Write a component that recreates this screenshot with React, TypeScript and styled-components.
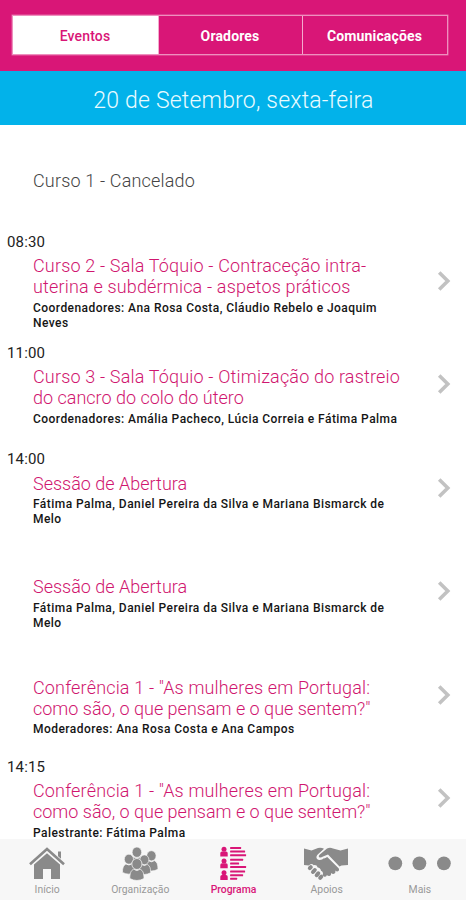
import React from 'react';
import styled, { createGlobalStyle } from 'styled-components';

const PINK = '#d91677';
const GREY = '#8a8a8a';

const GlobalStyle = createGlobalStyle`
  * { box-sizing: border-box; }
  body { margin: 0; background: #fff; font-family: Roboto, sans-serif; }
`;

const Screen = styled.div`
  display: flex;
  flex-direction: column;
  height: 900px;
  width: 466px;
  overflow: hidden;
  background: #fff;
`;

const Header = styled.header`
  flex: none;
  height: 71px;
  padding: 15px 18px 0 12px;
  background: ${PINK};
`;

const Segments = styled.div`
  display: grid;
  grid-template-columns: 145px 144px 1fr;
  height: 40px;
  border: 1px solid #ee90be;
  box-shadow: 0 0 0 0.5px #e668a8;
`;

const Segment = styled.button<{ $active?: boolean }>`
  border: 0;
  border-left: ${p => (p.$active ? '0' : '1.5px solid #f3abce')};
  padding: 2px 1px 0 0;
  background: ${p => (p.$active ? '#fff' : 'transparent')};
  color: ${p => (p.$active ? PINK : '#fff')};
  font: ${p => (p.$active ? 500 : 700)} 14px Roboto, sans-serif;
  letter-spacing: 0.15px;
`;

const DateBar = styled.div`
  flex: none;
  display: flex;
  align-items: center;
  justify-content: center;
  height: 54px;
  padding: 5px 0 0 1px;
  background: #02b2ea;
  color: #e9fbff;
  font-size: 23px;
  font-weight: 300;
  letter-spacing: 0.2px;
`;

const List = styled.main`
  flex: 1;
  min-height: 0;
  overflow: hidden;
`;

const Row = styled.article`
  display: flex;
  align-items: center;
  justify-content: space-between;
  height: 103.5px;
  padding: 0 15px 0 7px;
  > svg { margin-top: 1px; }
`;

const Time = styled.time`
  display: block;
  height: 21.5px;
  line-height: 17px;
  font-size: 15px;
  letter-spacing: 0.15px;
  color: #222;
`;

const Details = styled.div`
  padding-left: 26px;
  white-space: pre;
`;

const Title = styled.h2<{ $muted?: boolean }>`
  margin: 0;
  font-size: 18px;
  font-weight: 300;
  line-height: 21px;
  color: ${p => (p.$muted ? '#444' : '#d0166f')};
`;

const TitleLine = styled.span<{ $loose: boolean }>`
  display: block;
  letter-spacing: ${p => (p.$loose ? '0.17px' : '0')};
`;

const People = styled.p`
  margin: 3.5px 0 -3.5px;
  min-height: 15px;
  font-size: 12px;
  font-weight: 500;
  line-height: 15px;
  letter-spacing: 0.45px;
  color: #151515;
`;

const TabBar = styled.nav`
  flex: none;
  display: grid;
  grid-template-columns: repeat(5, 1fr);
  height: 61px;
  background: #f7f7f7;
`;

const Tab = styled.a<{ $active?: boolean }>`
  display: flex;
  flex-direction: column;
  align-items: center;
  padding-top: 6px;
  color: ${p => (p.$active ? PINK : GREY)};
  font-size: 10.4px;
  font-weight: ${p => (p.$active ? 500 : 400)};
  line-height: 13px;
  svg { display: block; }
`;

const TabLabel = styled.span<{ $active?: boolean }>`
  padding-left: 1px;
  color: ${p => (p.$active ? PINK : '#999')};
`;

const Chevron = () => (
  <svg width="14" height="22" viewBox="0 0 14 22" fill="none" stroke="#c2c2c2" strokeWidth="3.6">
    <path d="M2.2 2.5 10.8 11 2.2 19.5" />
  </svg>
);

const HomeIcon = () => (
  <svg width="48" height="38" viewBox="0 0 48 38" fill="currentColor">
    <path d="M35 6.500h3v8l-3-2.700zM24 8.200 37 19.500V34h-9V24h-8v10h-9V19.500z" />
    <path d="M7 19.200 24 4l17 15.200" fill="none" stroke="#f7f7f7" strokeWidth="4" />
    <path d="M7 19.200 24 4l17 15.200" fill="none" stroke="currentColor" strokeWidth="2.600" />
  </svg>
);

const PERSON = 'M-6.600 13.500c0-4.800 1-7.500 3.600-8.700Q0 7.200 3 4.800C5.600 6 6.600 8.700 6.600 13.500Q0 17-6.600 13.500z';

const Figure = ({ x, y, s }: { x: number; y: number; s: number }) => (
  <g transform={`translate(${x} ${y}) scale(${s})`} stroke="#f7f7f7" strokeWidth="0.7">
    <path d={PERSON} />
    <ellipse rx="4.700" ry="5.100" />
  </g>
);

const GroupIcon = () => (
  <svg width="48" height="38" viewBox="0 0 48 38" fill="currentColor">
    <Figure x={20.9} y={7.2} s={1.02} />
    <Figure x={35.4} y={10.8} s={1} />
    <Figure x={12.9} y={14.2} s={0.98} />
    <Figure x={28.4} y={14.8} s={0.96} />
    <Figure x={20.9} y={19} s={1.08} />
  </svg>
);

const SPEAKER_LINES = [
  [11, 15, 16],
  [13, 9, 16],
  [15, 13, 7],
];

const ProgramIcon = () => (
  <svg width="48" height="38" viewBox="0 0 48 38" fill="currentColor">
    {SPEAKER_LINES.map((widths, i) => (
      <g key={i} transform={`translate(11.300 ${1.8 + i * 11.8})`}>
        <circle cx="3.700" cy="2.400" r="2.500" />
        <path d="M0 9.700V6.300Q0 4.700 1.700 4.700h4Q7.400 4.700 7.400 6.300v3.400z" />
        {widths.map((w, j) => (
          <rect key={j} x="9.800" y={0.2 + j * 3.6} width={w} height="2" rx="0.500" />
        ))}
      </g>
    ))}
  </svg>
);

const HandshakeIcon = () => (
  <svg width="48" height="38" viewBox="0 0 48 38" fill="currentColor">
    <path d="M2 3.500 9.500 5.500 16 3q3-.8 6 .7L15.200 10q-2 3.300 1 4.700 3.200 1 6-1.700l3-1.200L36.500 23q1.600 2.600-1.200 3.500-1 0-2-1 .7 3-2 3.500-1.200 0-2.200-1 .2 2.800-2 3-1.400 0-2.200-1-.5 2.500-3 1.500l-1.400-1.200q1.500-3-1.500-4.500-.4-3-3.300-3.300-1-3-4-2.300-2.200-2.700-5 .2L2 20z" />
    <path d="M46 3.500V20l-6.500.500-2 1L26 9.500l-5 2q-2.500 1.800-4 .5-.8-.8.500-2.200L25 3.500q3-1.500 6 0L38.500 5.500z" />
    <path d="M22 13 25.300 11.200 37 22.600" fill="none" stroke="#f7f7f7" strokeWidth="1.100" />
    <g stroke="currentColor" strokeWidth="4" strokeLinecap="round">
      <path d="M8.800 22.200 7.800 23.200M12.800 25 11 27M16.300 28.300 14.700 30.200M19.300 31.700 18.200 32.800" />
    </g>
  </svg>
);

const DotsIcon = () => (
  <svg width="66" height="38" viewBox="0 0 66 38" fill="currentColor">
    <circle cx="9.300" cy="18.300" r="6.900" />
    <circle cx="33.400" cy="18.300" r="6.900" />
    <circle cx="57.900" cy="18.300" r="6.900" />
  </svg>
);

type Session = { time?: string; title: string; people: string; cancelled?: boolean };

const SESSIONS: Session[] = [
  { title: 'Curso 1 - Cancelado', people: '', cancelled: true },
  {
    time: '08:30',
    title: 'Curso 2 - Sala Tóquio - Contraceção intra-\nuterina e subdérmica - aspetos práticos',
    people: 'Coordenadores: Ana Rosa Costa, Cláudio Rebelo e Joaquim\nNeves',
  },
  {
    time: '11:00',
    title: 'Curso 3 - Sala Tóquio - Otimização do rastreio\ndo cancro do colo do útero',
    people: 'Coordenadores: Amália Pacheco, Lúcia Correia e Fátima Palma',
  },
  {
    time: '14:00',
    title: 'Sessão de Abertura',
    people: 'Fátima Palma, Daniel Pereira da Silva e Mariana Bismarck de\nMelo',
  },
  {
    title: 'Sessão de Abertura',
    people: 'Fátima Palma, Daniel Pereira da Silva e Mariana Bismarck de\nMelo',
  },
  {
    title: 'Conferência 1 - "As mulheres em Portugal:\ncomo são, o que pensam e o que sentem?"',
    people: 'Moderadores: Ana Rosa Costa e Ana Campos',
  },
  {
    time: '14:15',
    title: 'Conferência 1 - "As mulheres em Portugal:\ncomo são, o que pensam e o que sentem?"',
    people: 'Palestrante: Fátima Palma',
  },
];

const TABS = [
  { label: 'Início', Icon: HomeIcon },
  { label: 'Organização', Icon: GroupIcon },
  { label: 'Programa', Icon: ProgramIcon, active: true },
  { label: 'Apoios', Icon: HandshakeIcon },
  { label: 'Mais', Icon: DotsIcon },
];

export default function App() {
  return (
    <Screen>
      <GlobalStyle />
      <Header>
        <Segments>
          <Segment $active>Eventos</Segment>
          <Segment>Oradores</Segment>
          <Segment>Comunicações</Segment>
        </Segments>
      </Header>
      <DateBar>20 de Setembro, sexta-feira</DateBar>
      <List>
        {SESSIONS.map((s, i) => (
          <Row key={i}>
            <div>
              <Time>{s.time}</Time>
              <Details>
                <Title $muted={s.cancelled}>
                  {s.title.split('\n').map(line => (
                    <TitleLine key={line} $loose={line.includes(' - ')}>{line}</TitleLine>
                  ))}
                </Title>
                <People>{s.people}</People>
              </Details>
            </div>
            {!s.cancelled && <Chevron />}
          </Row>
        ))}
      </List>
      <TabBar>
        {TABS.map(({ label, Icon, active }) => (
          <Tab key={label} $active={active}>
            <Icon />
            <TabLabel $active={active}>{label}</TabLabel>
          </Tab>
        ))}
      </TabBar>
    </Screen>
  );
}
